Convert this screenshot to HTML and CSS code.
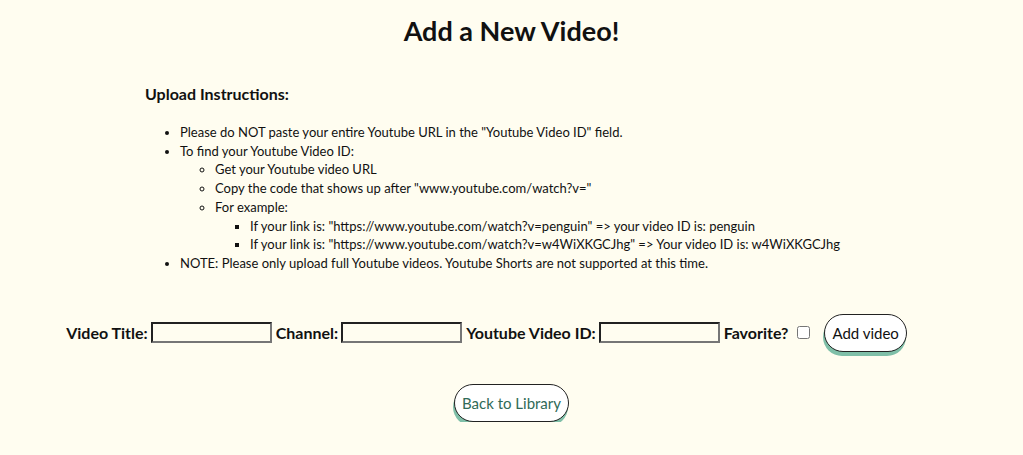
FILE: index.html
```html
<!DOCTYPE html>
<html lang="en">
<head>
    <meta charset="UTF-8">
    <meta name="viewport" content="width=device-width, initial-scale=1.0">
    <title>Add a New Video</title>
    <link rel="stylesheet" href="styles.css">
</head>
<body>
    <h1 class="title">Add a New Video!</h1>

    <div class="instructions">
        <h3>Upload Instructions:</h3>
        <ul>
            <li>Please do NOT paste your entire Youtube URL in the "Youtube Video ID" field.</li>
            <li>To find your Youtube Video ID:
                <ul>
                    <li>Get your Youtube video URL</li>
                    <li>Copy the code that shows up after "www.youtube.com/watch?v="</li>
                    <li>For example:
                        <ul>
                            <li>If your link is: "https://www.youtube.com/watch?v=penguin" =&gt; your video ID is: penguin</li>
                            <li>If your link is: "https://www.youtube.com/watch?v=w4WiXKGCJhg" =&gt; Your video ID is: w4WiXKGCJhg</li>
                        </ul>
                    </li>
                </ul>
            </li>
            <li>NOTE: Please only upload full Youtube videos. Youtube Shorts are not supported at this time.</li>
        </ul>
    </div>

    <form class="video-form" onsubmit="return false;">
        <label for="title">Video Title:</label>
        <input type="text" id="title">
        <label for="channel">Channel:</label>
        <input type="text" id="channel">
        <label for="videoId">Youtube Video ID:</label>
        <input type="text" id="videoId">
        <label for="favorite">Favorite?</label>
        <input type="checkbox" id="favorite">
        <button class="btn add-btn" type="submit">Add video</button>
    </form>

    <div class="back">
        <button class="btn back-btn">Back to Library</button>
    </div>
</body>
</html>
```

FILE: styles.css
```css
body {
    background-color: #fffdf0;
    color: #111;
    font-family: Lato, "Liberation Sans", sans-serif;
    font-size: 13px;
    margin: 0;
}
.title {
    text-align: center;
    font-size: 27px;
    margin: 14px 0 0;
}
.instructions {
    padding-left: 145px;
    margin-top: 37px;
}
.instructions h3 {
    font-size: 16px;
    margin: 0 0 20px;
}
.instructions ul {
    margin: 0;
    padding-left: 35px;
    line-height: 18.7px;
}
.instructions ul ul {
    list-style-type: circle;
}
.instructions ul ul ul {
    list-style-type: square;
}
.video-form {
    display: flex;
    justify-content: center;
    align-items: center;
    margin-top: 41px;
    padding-right: 54px;
    font-size: 16px;
}
.video-form label {
    font-weight: bold;
    margin: 0 3px 0 4px;
}
.video-form input[type="text"] {
    width: 113px;
    height: 15px;
    background: transparent;
    font-size: 13px;
}
.video-form input[type="checkbox"] {
    margin: 0 14px 0 6px;
}
.btn {
    background-color: #fff;
    border: 1px solid #222;
    border-radius: 20px;
    font-family: Lato, "Liberation Sans", sans-serif;
    font-size: 15px;
    padding: 9px 7px;
    box-shadow: -1px 4px 0 #7fbfa8;
    cursor: pointer;
}
.add-btn {
    color: #111;
}
.back {
    text-align: center;
    margin-top: 32px;
}
.back-btn {
    color: #2f6a57;
}
```
